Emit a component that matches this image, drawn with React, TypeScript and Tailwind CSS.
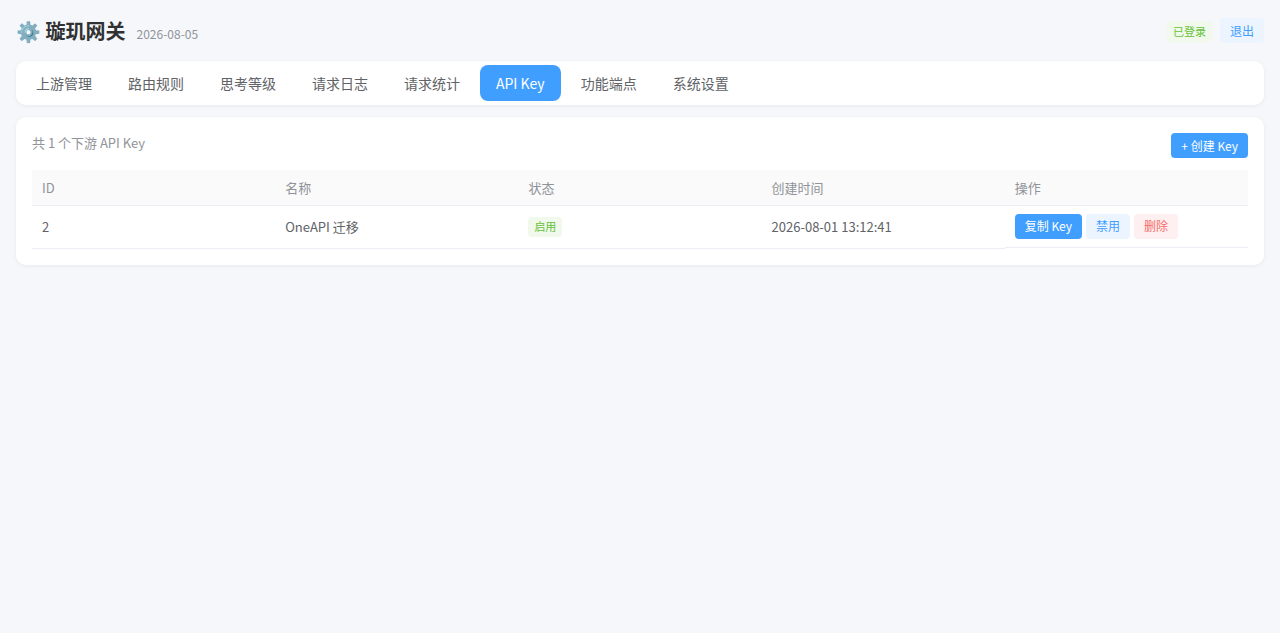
import React from 'react';

const tabs = ['上游管理', '路由规则', '思考等级', '请求日志', '请求统计', 'API Key', '功能端点', '系统设置'];
const headers = ['ID', '名称', '状态', '创建时间', '操作'];

export default function App() {
  return (
    <div className="min-h-[633px] bg-[#f5f7fa] p-4 text-[#606266] antialiased font-['Noto_Sans_CJK_SC','Noto_Sans',sans-serif]">
      {/* Header */}
      <div className="flex items-center justify-between h-[29px] mb-4">
        <div className="flex items-baseline">
          <h1 className="text-xl leading-[29px] font-bold text-[#303133]">⚙️ 璇玑网关</h1>
          <span className="ml-[11px] text-xs text-[#909399]">2026-08-05</span>
        </div>
        <div className="flex items-center gap-2">
          <span className="h-[21px] mt-[2px] px-[6px] flex items-center rounded bg-[#f0f9eb] text-[11px] text-[#67c23a]">已登录</span>
          <button className="h-[25px] px-[10px] rounded bg-[#ecf5ff] text-xs text-[#409eff]">退出</button>
        </div>
      </div>

      {/* Tabs */}
      <div className="flex gap-1 p-1 mb-3 bg-white rounded-[10px] shadow-[0_1px_4px_rgba(0,0,0,0.06)]">
        {tabs.map((t) => (
          <button
            key={t}
            className={`h-9 px-4 rounded-lg text-sm ${t === 'API Key' ? 'bg-[#409eff] text-white' : 'text-[#606266]'}`}
          >
            {t}
          </button>
        ))}
      </div>

      {/* API keys card */}
      <div className="bg-white rounded-[10px] p-4 shadow-[0_1px_4px_rgba(0,0,0,0.06)]">
        <div className="flex items-start justify-between mb-3">
          <span className="text-[13px] leading-5 text-[#909399]">共 1 个下游 API Key</span>
          <button className="h-[25px] px-[10px] rounded bg-[#409eff] text-xs text-white">+ 创建 Key</button>
        </div>
        <table className="w-full table-fixed border-collapse text-[13px]">
          <thead>
            <tr className="bg-[#fafafa]">
              {headers.map((h) => (
                <th key={h} className="h-[35px] px-[10px] text-left font-normal text-[#909399] border-b border-[#ebeef5]">
                  {h}
                </th>
              ))}
            </tr>
          </thead>
          <tbody>
            <tr>
              <td className="h-[43px] px-[10px] border-b border-[#ebeef5]">2</td>
              <td className="px-[10px] border-b border-[#ebeef5]">OneAPI 迁移</td>
              <td className="px-[10px] border-b border-[#ebeef5]">
                <span className="inline-flex items-center h-5 px-[6px] rounded bg-[#f0f9eb] text-[11px] text-[#67c23a]">启用</span>
              </td>
              <td className="px-[10px] border-b border-[#ebeef5]">2026-08-01 13:12:41</td>
              <td className="p-0 align-top">
                {/* this cell's rule sits 1px higher than the rest of the row */}
                <div className="h-[42px] px-[10px] flex items-center gap-1 border-b border-[#ebeef5]">
                  <button className="h-[25px] px-[10px] rounded bg-[#409eff] text-xs text-white">复制 Key</button>
                  <button className="h-[25px] px-[10px] rounded bg-[#ecf5ff] text-xs text-[#409eff]">禁用</button>
                  <button className="h-[25px] px-[10px] rounded bg-[#fef0f0] text-xs text-[#f56c6c]">删除</button>
                </div>
              </td>
            </tr>
          </tbody>
        </table>
      </div>
    </div>
  );
}
